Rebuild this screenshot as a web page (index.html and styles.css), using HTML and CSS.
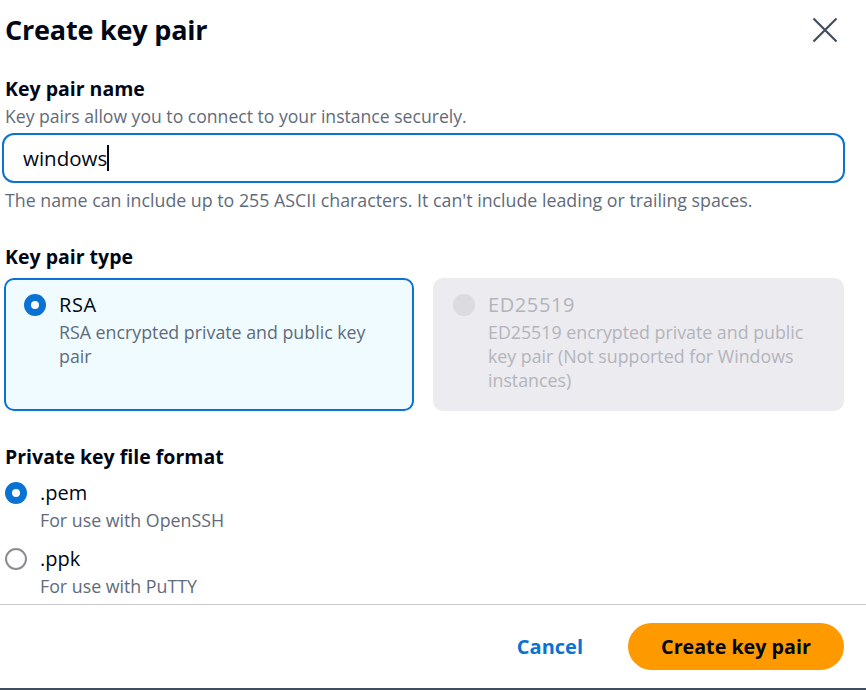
FILE: index.html
```html
<!DOCTYPE html>
<html lang="en">
<head>
<meta charset="utf-8">
<title>Create key pair</title>
<link rel="stylesheet" href="styles.css">
</head>
<body>
<div class="modal">
  <div class="content">
    <header class="head">
      <h1 class="title">Create key pair</h1>
      <button class="close" aria-label="Close">
        <svg width="26" height="26" viewBox="0 0 26 26"><path d="M1.5 1.5 L24.5 24.5 M24.5 1.5 L1.5 24.5" stroke="#414d5c" stroke-width="2.2" fill="none"/></svg>
      </button>
    </header>

    <section class="field">
      <div class="label">Key pair name</div>
      <div class="desc">Key pairs allow you to connect to your instance securely.</div>
      <div class="input"><span class="value">windows</span><span class="caret"></span></div>
      <div class="hint">The name can include up to 255 ASCII characters. It can't include leading or trailing spaces.</div>
    </section>

    <section class="field type">
      <div class="label">Key pair type</div>
      <div class="tiles">
        <div class="tile selected">
          <span class="radio checked"></span>
          <div class="tile-text">
            <div class="opt caps">RSA</div>
            <div class="opt-desc">RSA encrypted private and public key pair</div>
          </div>
        </div>
        <div class="tile disabled">
          <span class="radio off"></span>
          <div class="tile-text">
            <div class="opt caps">ED25519</div>
            <div class="opt-desc">ED25519 encrypted private and public key pair (Not supported for Windows instances)</div>
          </div>
        </div>
      </div>
    </section>

    <section class="field format">
      <div class="label">Private key file format</div>
      <div class="radios">
        <div class="radio-row">
          <span class="radio checked"></span>
          <div>
            <div class="opt">.pem</div>
            <div class="opt-desc">For use with OpenSSH</div>
          </div>
        </div>
        <div class="radio-row">
          <span class="radio empty"></span>
          <div>
            <div class="opt">.ppk</div>
            <div class="opt-desc">For use with PuTTY</div>
          </div>
        </div>
      </div>
    </section>
  </div>

  <footer class="foot">
    <button class="cancel">Cancel</button>
    <button class="primary">Create key pair</button>
  </footer>
</div>
</body>
</html>
```
FILE: styles.css
```css
* { box-sizing: border-box; }
html, body { margin: 0; padding: 0; background: #ffffff; }
body {
  font-family: "Open Sans", "Noto Sans", sans-serif;
  color: #000716;
  width: 866px;
  height: 690px;
  overflow: hidden;
}
.modal {
  height: 690px;
  display: flex;
  flex-direction: column;
  border-bottom: 2px solid #414d5c;
}
.content {
  flex: 1;
  padding: 0 21px 0 2px;
}
.head {
  display: flex;
  justify-content: space-between;
  align-items: center;
  height: 60px;
  padding-left: 3px;
}
.title {
  margin: 0;
  font-size: 27px;
  font-weight: 700;
  line-height: 36px;
  letter-spacing: -0.2px;
}
.close {
  border: 0;
  background: none;
  padding: 0;
  margin-right: 7px;
  width: 26px;
  height: 26px;
  display: flex;
}
.field { display: flex; flex-direction: column; }
.label {
  font-size: 19.5px;
  font-weight: 700;
  line-height: 22px;
  padding-left: 3px;
  margin-top: 18px;
}
.desc, .hint {
  font-size: 17.6px;
  line-height: 22px;
  color: #5f6b7a;
  padding-left: 3px;
}
.hint { font-size: 17.8px; }
.desc { margin-top: 5px; }
.input {
  margin-top: 6px;
  height: 50px;
  border: 2px solid #0972d3;
  border-radius: 12px;
  display: flex;
  align-items: center;
  padding-left: 19px;
  font-size: 20.5px;
}
.caret {
  display: inline-block;
  width: 1.5px;
  height: 26px;
  background: #000716;
}
.hint { margin-top: 6px; }
.type .label { margin-top: 35px; }
.tiles {
  margin-top: 10px;
  display: grid;
  grid-template-columns: 410px 411px;
  gap: 19px;
  padding-left: 2px;
}
.tile {
  height: 133px;
  border-radius: 10px;
  display: flex;
  gap: 13px;
  padding: 13px 14px 0 18px;
}
.tile.selected {
  background: #f0fbff;
  border: 2px solid #0972d3;
}
.tile.disabled {
  background: #ebebf0;
  border: 2px solid #ebebf0;
  color: #b4b4bb;
}
.radio {
  flex: none;
  width: 22px;
  height: 22px;
  border-radius: 50%;
  margin-top: 1px;
}
.radio.checked {
  background: #ffffff;
  border: 7px solid #0972d3;
}
.radio.off { background: #dcdce0; }
.radio.empty {
  background: #ffffff;
  border: 2px solid #8c8c94;
}
.opt {
  font-size: 20px;
  line-height: 24px;
}
.opt.caps { letter-spacing: 0.6px; }
.opt-desc {
  font-size: 17.8px;
  line-height: 24px;
  color: #5f6b7a;
  margin-top: 3px;
}
.tile.disabled .opt, .tile.disabled .opt-desc { color: #b4b4bb; }
.format .label { margin-top: 35px; }
.radios {
  margin-top: 13px;
  display: flex;
  flex-direction: column;
  gap: 15px;
  padding-left: 3px;
}
.radio-row {
  display: flex;
  gap: 13px;
}
.radio-row .opt-desc { margin-top: 3px; }
.foot {
  border-top: 1px solid #c6c6cd;
  display: flex;
  justify-content: flex-end;
  align-items: center;
  gap: 45px;
  padding: 18px 22px 18px 0;
}
.cancel {
  border: 0;
  background: none;
  font-family: inherit;
  font-size: 20px;
  font-weight: 700;
  color: #0972d3;
  padding: 0;
}
.primary {
  border: 0;
  width: 216px;
  height: 47px;
  border-radius: 24px;
  background: #ff9900;
  color: #000716;
  font-family: inherit;
  font-size: 19.7px;
  font-weight: 700;
}
```
